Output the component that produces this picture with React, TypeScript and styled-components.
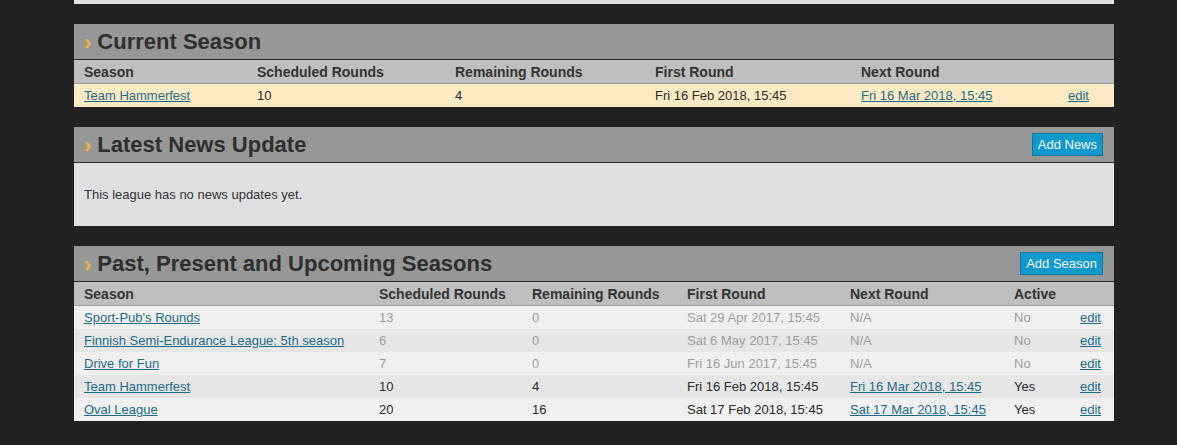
import { FC, ReactNode } from "react";
import styled, { createGlobalStyle } from "styled-components";

type Season = {
  name: string;
  scheduled: number;
  remaining: number;
  first: string;
  next: string | null;
  active: boolean;
};

const seasons: Season[] = [
  { name: "Sport-Pub's Rounds", scheduled: 13, remaining: 0, first: "Sat 29 Apr 2017, 15:45", next: null, active: false },
  { name: "Finnish Semi-Endurance League: 5th season", scheduled: 6, remaining: 0, first: "Sat 6 May 2017, 15:45", next: null, active: false },
  { name: "Drive for Fun", scheduled: 7, remaining: 0, first: "Fri 16 Jun 2017, 15:45", next: null, active: false },
  { name: "Team Hammerfest", scheduled: 10, remaining: 4, first: "Fri 16 Feb 2018, 15:45", next: "Fri 16 Mar 2018, 15:45", active: true },
  { name: "Oval League", scheduled: 20, remaining: 16, first: "Sat 17 Feb 2018, 15:45", next: "Sat 17 Mar 2018, 15:45", active: true },
];

const GlobalStyle = createGlobalStyle`
  body {
    margin: 0;
    background: #222222;
    font-family: "Liberation Sans", Arial, sans-serif;
    color: #333;
  }
`;

type PanelProps = {
  title: string;
  action?: string;
  children: ReactNode;
};

const Panel: FC<PanelProps> = ({ title, action, children }) => (
  <Section>
    <Header>
      <Title>
        <Chevron>›</Chevron>
        {title}
      </Title>
      {action && <ActionButton>{action}</ActionButton>}
    </Header>
    {children}
  </Section>
);

export default function App() {
  return (
    <>
      <GlobalStyle />
      <Page>
        <PrevPanel />
        <Panel title="Current Season">
          <Table>
            <colgroup>
              <col style={{ width: 173 }} />
              <col style={{ width: 198 }} />
              <col style={{ width: 200 }} />
              <col style={{ width: 206 }} />
              <col style={{ width: 207 }} />
              <col />
            </colgroup>
            <thead>
              <tr>
                <Th>Season</Th>
                <Th>Scheduled Rounds</Th>
                <Th>Remaining Rounds</Th>
                <Th>First Round</Th>
                <Th>Next Round</Th>
                <Th />
              </tr>
            </thead>
            <tbody>
              <Row $bg="#ffeac4">
                <Td><Link href="#">Team Hammerfest</Link></Td>
                <Td>10</Td>
                <Td>4</Td>
                <Td>Fri 16 Feb 2018, 15:45</Td>
                <Td><Link href="#">Fri 16 Mar 2018, 15:45</Link></Td>
                <Td><Link href="#">edit</Link></Td>
              </Row>
            </tbody>
          </Table>
        </Panel>

        <Panel title="Latest News Update" action="Add News">
          <NewsBody>This league has no news updates yet.</NewsBody>
        </Panel>

        <Panel title="Past, Present and Upcoming Seasons" action="Add Season">
          <Table>
            <colgroup>
              <col style={{ width: 295 }} />
              <col style={{ width: 153 }} />
              <col style={{ width: 155 }} />
              <col style={{ width: 163 }} />
              <col style={{ width: 164 }} />
              <col style={{ width: 66 }} />
              <col />
            </colgroup>
            <thead>
              <tr>
                <Th>Season</Th>
                <Th>Scheduled Rounds</Th>
                <Th>Remaining Rounds</Th>
                <Th>First Round</Th>
                <Th>Next Round</Th>
                <Th>Active</Th>
                <Th />
              </tr>
            </thead>
            <tbody>
              {seasons.map((s, i) => (
                <Row key={s.name} $bg={i % 2 === 0 ? "#f0f0f0" : "#e6e6e6"}>
                  <Td><Link href="#">{s.name}</Link></Td>
                  <Td $muted={!s.active}>{s.scheduled}</Td>
                  <Td $muted={!s.active}>{s.remaining}</Td>
                  <Td $muted={!s.active}>{s.first}</Td>
                  <Td $muted={!s.active}>
                    {s.next ? <Link href="#">{s.next}</Link> : "N/A"}
                  </Td>
                  <Td $muted={!s.active}>{s.active ? "Yes" : "No"}</Td>
                  <Td><Link href="#">edit</Link></Td>
                </Row>
              ))}
            </tbody>
          </Table>
        </Panel>
      </Page>
    </>
  );
}

const Page = styled.div`
  width: 1040px;
  margin-left: 74px;
  display: flex;
  flex-direction: column;
  gap: 20px;
`;

const PrevPanel = styled.div`
  height: 4px;
  background: #e0e0e2;
`;

const Section = styled.section`
  display: flex;
  flex-direction: column;
`;

const Header = styled.div`
  height: 35px;
  background: #979797;
  border-bottom: 1px solid #2b2b2b;
  display: flex;
  align-items: center;
  justify-content: space-between;
  padding: 0 11px 0 10px;
`;

const Title = styled.h2`
  margin: 0;
  font-size: 22px;
  font-weight: bold;
  color: #2e2e2e;
  display: flex;
  align-items: center;
`;

const Chevron = styled.span`
  color: #f2b33a;
  font-size: 22px;
  margin-right: 6px;
  position: relative;
  top: 1px;
`;

const ActionButton = styled.button`
  height: 23px;
  padding: 0 5px;
  background: #1199cc;
  border: 1px solid #0b76a0;
  color: #f2f6f8;
  font-family: "Liberation Sans", Arial, sans-serif;
  font-size: 13px;
  cursor: pointer;
`;

const Table = styled.table`
  width: 100%;
  border-collapse: collapse;
  table-layout: fixed;
  font-size: 13px;
`;

const Th = styled.th`
  height: 23px;
  padding: 0 10px;
  background: #bfbfbf;
  border-bottom: 1px solid #9a9a9a;
  text-align: left;
  font-size: 14px;
  font-weight: bold;
  color: #333;
  white-space: nowrap;
`;

const Row = styled.tr<{ $bg: string }>`
  background: ${(p) => p.$bg};
`;

const Td = styled.td<{ $muted?: boolean }>`
  height: 23px;
  padding: 0 10px;
  color: ${(p) => (p.$muted ? "#9d9d9d" : "#2b2b2b")};
  white-space: nowrap;
`;

const Link = styled.a`
  color: #1e6a8c;
  text-decoration: underline;
`;

const NewsBody = styled.div`
  height: 63px;
  background: #e0e0e2;
  padding: 0 10px;
  display: flex;
  align-items: center;
  font-size: 13px;
  color: #333;
`;
